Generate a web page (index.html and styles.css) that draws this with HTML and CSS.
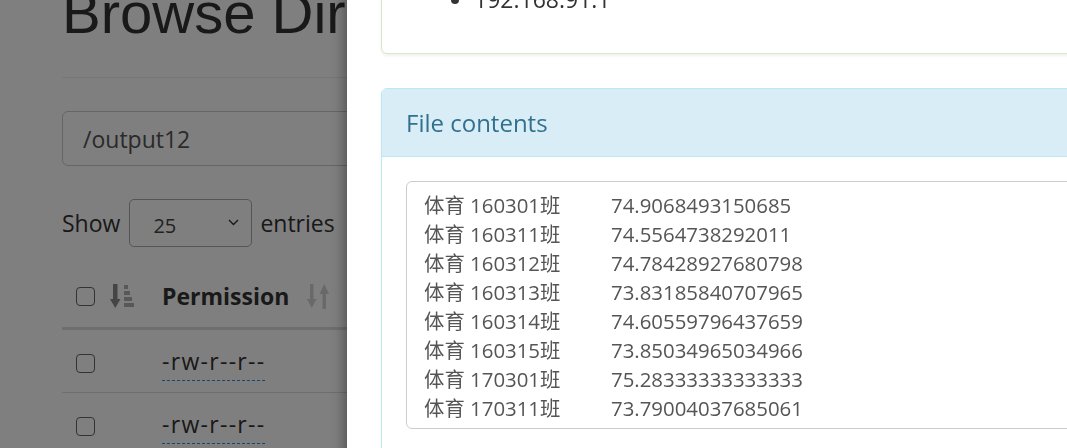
FILE: index.html
```html
<!DOCTYPE html>
<html lang="en">
<head>
<meta charset="utf-8">
<title>Browse Directory</title>
<link rel="stylesheet" href="styles.css">
</head>
<body>
<div class="page">
  <div class="page-header"><h1>Browse Directory</h1></div>
  <div class="path-input">/output12</div>
  <div class="length-row">
    <span>Show</span>
    <div class="select-box"><span class="select-value">25</span>
      <svg class="chevron" width="11" height="7" viewBox="0 0 11 7"><polyline points="1,1 5.5,5.5 10,1" fill="none" stroke="#333" stroke-width="1.4"/></svg>
    </div>
    <span>entries</span>
  </div>
  <table class="dir-table">
    <thead>
      <tr>
        <th class="col-check">
          <div class="th-inner">
            <span class="checkbox"></span>
            <svg class="sort-icon" width="24" height="25" viewBox="0 0 24 25">
              <rect x="3" y="0" width="4.5" height="17" fill="#8a8a8a"/>
              <polygon points="0,15 10.5,15 5.25,24" fill="#8a8a8a"/>
              <rect x="14" y="1" width="4" height="4" fill="#b0b0b0"/>
              <rect x="14" y="7" width="6" height="4" fill="#b0b0b0"/>
              <rect x="14" y="13" width="8" height="4" fill="#b0b0b0"/>
              <rect x="14" y="19" width="10" height="4" fill="#b0b0b0"/>
            </svg>
          </div>
        </th>
        <th class="col-perm">
          <div class="th-inner">
            <span>Permission</span>
            <svg class="sort-icon" width="25" height="25" viewBox="0 0 25 25">
              <rect x="3" y="0" width="3.5" height="17" fill="#d2d2d2"/>
              <polygon points="0,15 9.5,15 4.75,24" fill="#d2d2d2"/>
              <rect x="15.5" y="8" width="3.5" height="17" fill="#d2d2d2"/>
              <polygon points="12.5,10 22,10 17.25,0" fill="#d2d2d2"/>
            </svg>
          </div>
        </th>
        <th>Owner</th>
        <th>Group</th>
        <th>Size</th>
        <th>Name</th>
      </tr>
    </thead>
    <tbody>
      <tr>
        <td class="col-check"><span class="checkbox"></span></td>
        <td class="col-perm"><span class="perm-link">-rw-r--r--</span></td>
        <td>root</td><td>supergroup</td><td>0 B</td><td>_SUCCESS</td>
      </tr>
      <tr>
        <td class="col-check"><span class="checkbox"></span></td>
        <td class="col-perm"><span class="perm-link">-rw-r--r--</span></td>
        <td>root</td><td>supergroup</td><td>1.1 KB</td><td>part-r-00000</td>
      </tr>
    </tbody>
  </table>
</div>

<div class="backdrop"></div>

<div class="modal">
  <div class="modal-body">
    <div class="panel panel-success">
      <div class="panel-body">
        <ul class="host-list"><li>192.168.91.1</li></ul>
      </div>
    </div>
    <div class="panel panel-info">
      <div class="panel-heading">File contents</div>
      <div class="panel-body">
        <textarea class="file-text" readonly>体育 160301班&#9;74.9068493150685
体育 160311班&#9;74.5564738292011
体育 160312班&#9;74.78428927680798
体育 160313班&#9;73.83185840707965
体育 160314班&#9;74.60559796437659
体育 160315班&#9;73.85034965034966
体育 170301班&#9;75.28333333333333
体育 170311班&#9;73.79004037685061</textarea>
      </div>
    </div>
  </div>
</div>
</body>
</html>
```

FILE: styles.css
```css
html, body {
  margin: 0;
  padding: 0;
  background: #fff;
  overflow: hidden;
}

body {
  font-family: "Open Sans", "Noto Sans", "Noto Sans CJK SC", sans-serif;
  font-size: 23px;
  color: #333;
  width: 1067px;
  height: 448px;
}

.page {
  padding-left: 62px;
  width: 1100px;
}

.page-header {
  margin-top: -19px;
  padding-bottom: 16px;
  border-bottom: 1px solid #eee;
}

.page-header h1 {
  margin: 0 0 16px;
  font-family: "Liberation Sans", Arial, sans-serif;
  font-weight: normal;
  font-size: 58px;
  line-height: 64px;
  color: #333;
}

.path-input {
  margin-top: 33px;
  box-sizing: border-box;
  height: 55px;
  width: 1000px;
  border: 1px solid #ccc;
  border-radius: 6px;
  padding: 0 20px;
  display: flex;
  align-items: center;
  color: #555;
}

.length-row {
  margin-top: 33px;
  display: flex;
  align-items: center;
  gap: 8px;
  height: 48px;
}

.select-box {
  box-sizing: border-box;
  width: 123px;
  height: 48px;
  border: 1px solid #aaa;
  border-radius: 5px;
  display: flex;
  align-items: center;
  justify-content: space-between;
  padding: 4px 12px 0 23px;
  margin-left: 1px;
}

.select-value {
  font-size: 20px;
  color: #444;
}

.chevron {
  margin-top: -6px;
}

.dir-table {
  margin-top: 18px;
  border-collapse: collapse;
  width: 1000px;
}

.dir-table th,
.dir-table td {
  padding: 0 14px;
  text-align: left;
  vertical-align: middle;
  white-space: nowrap;
}

.dir-table thead th {
  height: 62px;
  border-bottom: 3px solid #ddd;
  font-weight: bold;
}

.dir-table tbody td {
  height: 62px;
  border-bottom: 1px solid #ddd;
}

.col-check {
  width: 58px;
}

.col-perm {
  width: 170px;
}

.th-inner {
  display: flex;
  align-items: center;
  justify-content: space-between;
}

.checkbox {
  display: inline-block;
  box-sizing: border-box;
  width: 19px;
  height: 19px;
  border: 1.5px solid #666;
  border-radius: 4px;
  background: #fff;
  vertical-align: middle;
}

.sort-icon {
  display: block;
}

.perm-link {
  color: #333;
  letter-spacing: 1.3px;
  border-bottom: 1px dashed #2a8fe0;
  padding-bottom: 3px;
}

.backdrop {
  position: fixed;
  inset: 0;
  background: rgba(0, 0, 0, 0.5);
  z-index: 10;
}

.modal {
  position: fixed;
  left: 347px;
  top: -80px;
  width: 900px;
  height: 800px;
  background: #fff;
  z-index: 20;
  box-shadow: 0 5px 15px rgba(0, 0, 0, 0.5);
}

.modal-body {
  padding: 35px 34px;
}

.panel {
  border: 1px solid transparent;
  border-radius: 6px;
  box-shadow: 0 2px 3px rgba(0, 0, 0, 0.06);
  background: #fff;
}

.panel-success {
  border-color: #d6e9c6;
  margin-bottom: 34px;
}

.panel-success .panel-body {
  padding: 27px 24px 22px;
}

.panel-info {
  border-color: #bce8f1;
}

.panel-body {
  padding: 24px;
}

.host-list {
  margin: 0 0 16px;
  padding-left: 68px;
  font-size: 23px;
  line-height: 32px;
  color: #333;
}

.panel-heading {
  background: #d9edf7;
  color: #31708f;
  border-bottom: 1px solid #bce8f1;
  border-radius: 5px 5px 0 0;
  padding: 17px 24px 16px;
  font-size: 24px;
  line-height: 34px;
}

.file-text {
  display: block;
  box-sizing: border-box;
  width: 760px;
  height: 248px;
  margin: 0;
  border: 1px solid #ccc;
  border-radius: 6px;
  padding: 9px 17px;
  font-family: "Open Sans", "Noto Sans CJK SC", sans-serif;
  font-size: 20.4px;
  line-height: 29px;
  color: #555;
  tab-size: 187px;
  resize: none;
  overflow: hidden;
  white-space: pre;
  outline: none;
}
```
